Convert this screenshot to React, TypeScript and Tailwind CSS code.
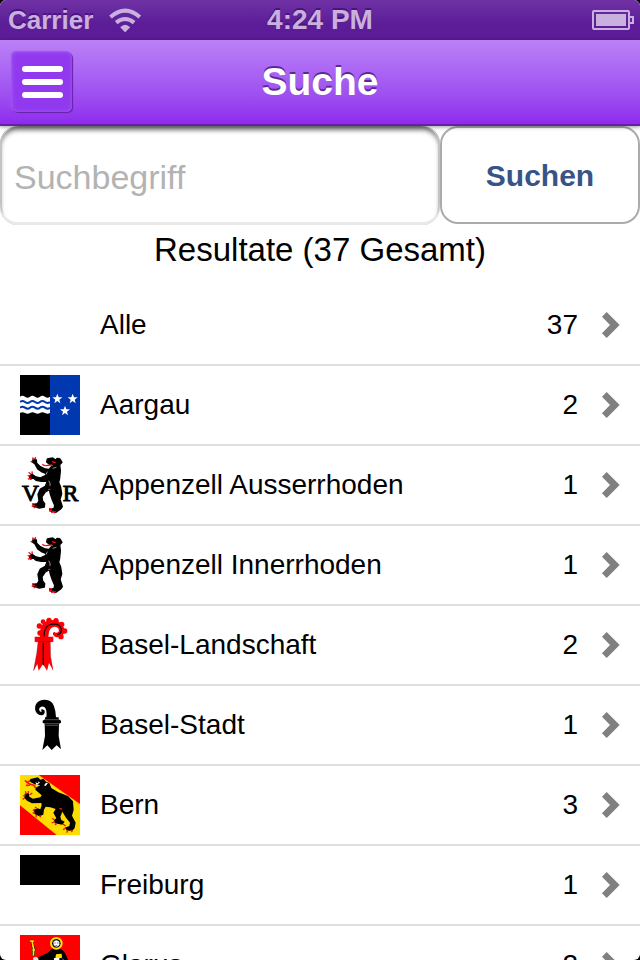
import React from 'react';

const FLAG_BOX = '30 15 180 180';

function Flag({ children }: { children?: React.ReactNode }) {
  return (
    <svg viewBox={FLAG_BOX} className="size-[60px] shrink-0" aria-hidden="true">
      {children}
    </svg>
  );
}

function Aargau() {
  const wave = 'q7 -6 15 0 t15 0 t15 0 t15 0 t15 0 t15 0';
  const star = 'M0 -15 L4 -4 L15 -4 L6 3 L9 14 L0 7 L-9 14 L-6 3 L-15 -4 L-4 -4 Z';
  return (
    <Flag>
      <rect x="30" y="15" width="90" height="180" fill="#000" />
      <rect x="120" y="15" width="90" height="180" fill="#0038b0" />
      <path d={`M30 80 ${wave} V129 q-7 5 -15 0 t-15 0 t-15 0 t-15 0 t-15 0 t-15 0 Z`} fill="#fff" />
      <path d={`M30 96 ${wave} M30 113 ${wave}`} fill="none" stroke="#0038b0" strokeWidth="6" />
      <g fill="#fff">
        <path d={star} transform="translate(142 86)" />
        <path d={star} transform="translate(188 86)" />
        <path d={star} transform="translate(165 122)" />
      </g>
    </Flag>
  );
}

function StandingBear() {
  return (
    <g>
      <path
        d="M112 27 L128 24 L137 30 L142 25 L150 27 L156 37 L149 44 L151 62 L149 84 L146 97 L152 112 L155 132 L150 148 L157 170 L152 177 L137 187 L123 184 L119 179 L132 175 L134 166 L127 150 L121 132 L118 119 L106 126 L96 141 L98 153 L104 161 L103 171 L88 174 L70 169 L69 163 L82 161 L87 153 L84 133 L91 117 L106 109 L112 94 L94 94 L78 91 L70 84 L61 87 L58 78 L66 73 L76 80 L90 84 L106 77 L109 71 L96 66 L83 57 L75 42 L67 36 L70 27 L79 30 L80 40 L91 50 L106 57 L118 58 L123 51 L136 45 L118 43 L110 36 Z"
        fill="#000"
        stroke="#000"
        strokeWidth="4"
        strokeLinejoin="round"
      />
      <g fill="none" stroke="#ff0f18" strokeWidth="4">
        <path d="M97 43 Q104 49 112 46 L126 45 M126 35 L137 38" />
        <path d="M67 37 L62 33 M70 30 L68 22 M75 29 L77 21" />
        <path d="M63 73 L56 67 M67 72 L66 64 M61 78 L53 77 M63 85 L54 87" />
        <path d="M73 161 L66 162 M75 166 L65 169 M80 170 L71 174" />
        <path d="M124 177 L117 175 M126 181 L117 183 M131 183 L124 189 M136 183 L133 190 M114 119 L121 118" />
      </g>
      <path d="M108 74 L112 65 M116 92 Q122 98 120 108 M128 55 L139 52" stroke="#ddd" strokeWidth="2" fill="none" />
    </g>
  );
}

function Ausserrhoden() {
  return (
    <Flag>
      <g fontFamily="'Liberation Serif', serif" fontSize="70" fill="#000" stroke="#000" strokeWidth="3">
        <text x="36" y="152">V</text>
        <text x="158" y="152">R</text>
      </g>
      <StandingBear />
    </Flag>
  );
}

function Innerrhoden() {
  return (
    <Flag>
      <StandingBear />
    </Flag>
  );
}

function BaselLandschaft() {
  return (
    <Flag>
      <g fill="#fb0007">
        <circle cx="90" cy="69" r="8" />
        <circle cx="88" cy="48" r="8" />
        <circle cx="99" cy="35" r="7" />
        <circle cx="117" cy="31" r="8" />
        <circle cx="138" cy="32" r="8" />
        <circle cx="155" cy="43" r="8" />
        <circle cx="164" cy="63" r="8" />
        <circle cx="153" cy="80" r="8" />
      </g>
      <path
        d="M90 80 Q88 48 104 36 Q124 25 147 35 Q168 50 162 70 Q153 86 135 80 Q124 73 132 65 Q139 71 146 65 Q149 52 134 50 Q116 50 115 80 L130 80 V95 H121 L122 140 L130 182 L117 159 L111 182 L99 162 L86 182 L82 162 L70 184 L80 130 L84 95 H74 V80 Z"
        fill="#fb0007"
      />
      <path
        d="M102 79 Q102 46 124 43 Q149 39 154 57 Q155 72 141 74 M100 98 V166"
        fill="none"
        stroke="#111"
        strokeWidth="4"
      />
      <path d="M84 98 L80 132 L71 182 M121 98 L122 140 L128 180" fill="none" stroke="#733" strokeWidth="1" />
      <path d="M76 95 H128" stroke="#a00" strokeWidth="2" />
    </Flag>
  );
}

function BaselStadt() {
  return (
    <Flag>
      <path
        d="M109 82 Q112 61 104 52 Q94 46 88 55 Q86 65 94 66 Q97 62 92 60 Q98 54 104 62 Q106 72 96 76 Q83 77 77 64 Q71 47 84 35 Q100 25 120 33 Q136 41 138 82 H146 V88 L153 92 V98 L147 101 L146 138 L153 178 L140 166 L125 180 L112 166 L97 180 L105 138 L104 101 L98 98 V92 L105 88 V82 Z"
        fill="#000"
      />
      <path d="M105 89 H147 M102 101 H150 M107 106 H145" stroke="#777" strokeWidth="2" />
    </Flag>
  );
}

function Bern() {
  return (
    <Flag>
      <rect x="30" y="15" width="180" height="180" fill="#ff0000" />
      <path d="M30 15 H86 L210 102 V195 H140 L30 106 Z" fill="#ffdc00" />
      <path
        d="M61 27 L84 22 L91 29 L101 26 L108 35 L118 39 L124 54 L145 67 L174 78 L189 94 L191 120 L186 137 L197 158 L194 174 L187 182 L171 182 L164 173 L178 168 L180 158 L168 143 L157 125 L151 140 L154 150 L164 155 L157 164 L134 160 L132 151 L139 145 L130 128 L137 117 L121 112 L107 110 L102 119 L100 134 L88 139 L73 132 L72 119 L83 115 L91 118 L95 106 L94 99 L66 100 L51 92 L43 83 L44 71 L56 69 L58 80 L69 86 L91 82 L95 76 L76 59 L77 53 L91 46 L74 43 L65 38 L59 34 Z"
        fill="#000"
      />
      <g fill="none" stroke="#f01818" strokeWidth="5">
        <path d="M60 32 L52 38 L61 43 L73 46 L76 54 M53 39 L45 31 M60 45 L48 46" />
        <path d="M47 75 L39 78 M49 73 L46 64 M55 71 L55 63 M58 75 L67 69 M44 84 L38 88" strokeWidth="4" />
        <path d="M74 117 L69 122 M80 115 L75 111 M74 126 L68 130 M79 134 L78 142 M89 136 L92 142" strokeWidth="4" />
        <path d="M134 150 L127 145 M134 155 L125 159 M141 160 L135 165 M148 116 L156 117" strokeWidth="4" />
        <path d="M167 168 L159 162 M168 174 L159 179 M174 180 L170 188 M182 180 L187 186" strokeWidth="4" />
      </g>
      <path d="M80 45 L76 37 L88 41 Z M102 46 L108 38 L114 39 L107 48 Z M83 34 L91 38 L86 40 Z" fill="#fff" />
    </Flag>
  );
}

function Freiburg() {
  return (
    <Flag>
      <rect x="30" y="15" width="180" height="90" fill="#000" />
      <rect x="30" y="105" width="180" height="90" fill="#fff" />
    </Flag>
  );
}

function Glarus() {
  return (
    <Flag>
      <rect x="30" y="15" width="180" height="180" fill="#ff0000" />
      <path d="M68 94 L84 82 L112 69 L125 58 Q139 50 154 58 Q170 68 177 102 L186 195 H95 L110 94 L90 92 Z" fill="#000" />
      <circle cx="139" cy="40" r="16" fill="#fff" stroke="#ffe400" strokeWidth="6" />
      <circle cx="139" cy="40" r="13" fill="#111" />
      <path d="M130 36 Q139 26 148 36 V45 Q140 56 131 45 Z" fill="#fff" />
      <path d="M133 39 H137 M141 39 H145 M136 47 H142" stroke="#222" strokeWidth="2" />
      <path d="M60 33 H72 M66 33 L71 58 L70 77 M66 60 H76" fill="none" stroke="#111" strokeWidth="8" />
      <path d="M60 33 H72 M66 33 L71 58 L70 77 M67 60 H75" fill="none" stroke="#ffe400" strokeWidth="5" />
      <path d="M69 83 L78 80 L85 85 L86 95 H70 Z" fill="#ddd" />
      <path d="M138 73 L155 71 L156 83 L146 85 H136 Z" fill="#ffe400" />
      <path d="M132 84 H148 V94 H132 Z" fill="#fff" />
      <path d="M155 85 L168 95" stroke="#999" strokeWidth="2" />
    </Flag>
  );
}

type Canton = { name: string; count: number; flag: React.ReactNode };

const cantons: Canton[] = [
  { name: 'Alle', count: 37, flag: <Flag /> },
  { name: 'Aargau', count: 2, flag: <Aargau /> },
  { name: 'Appenzell Ausserrhoden', count: 1, flag: <Ausserrhoden /> },
  { name: 'Appenzell Innerrhoden', count: 1, flag: <Innerrhoden /> },
  { name: 'Basel-Landschaft', count: 2, flag: <BaselLandschaft /> },
  { name: 'Basel-Stadt', count: 1, flag: <BaselStadt /> },
  { name: 'Bern', count: 3, flag: <Bern /> },
  { name: 'Freiburg', count: 1, flag: <Freiburg /> },
  { name: 'Glarus', count: 2, flag: <Glarus /> },
];

function StatusBar() {
  return (
    <div className="grid h-10 shrink-0 grid-cols-3 items-center bg-linear-to-b from-[#6f31a4] via-[#5c1d98] via-60% to-[#5c1b97] px-2 font-bold text-[#c9b0df] [text-shadow:0_-2px_0_#49157a]">
      <div className="flex items-center gap-4">
        <span className="text-[26px] leading-10">Carrier</span>
        <svg viewBox="330 22 98 72" className="h-6 w-[33px]" aria-hidden="true">
          <path d="M334 49 Q378 11 422 49" fill="none" stroke="#c9b0df" strokeWidth="12" />
          <path d="M351 66 Q378 44 405 66" fill="none" stroke="#c9b0df" strokeWidth="12" />
          <path d="M363 80 Q378 65 393 80 L378 95 Z" fill="#c9b0df" />
        </svg>
      </div>
      <span className="text-center text-[28px] leading-10">4:24 PM</span>
      <svg viewBox="0 0 42 20" className="mr-[-2px] h-5 w-[42px] justify-self-end" aria-hidden="true">
        <rect x="1" y="1" width="36" height="18" rx="1" fill="none" stroke="#c9b0df" strokeWidth="2" />
        <rect x="4" y="4" width="30" height="12" fill="#c9b0df" />
        <path d="M38 7 H41 V13 H38" fill="none" stroke="#c9b0df" strokeWidth="2" />
      </svg>
    </div>
  );
}

function NavBar() {
  return (
    <header className="relative z-10 grid h-[86px] shrink-0 grid-cols-[1fr_auto_1fr] items-center border-b-2 border-[#681fa8] bg-linear-to-b from-[#bc80f6] to-[#8f2aed] px-3 shadow-[0_1px_4px_rgba(0,0,0,0.4)]">
      <button
        type="button"
        aria-label="Menü"
        className="flex size-[60px] flex-col items-center justify-center gap-[7px] rounded-[5px] bg-[#9039ee] shadow-[inset_0_0_4px_#a45cf2,1px_1px_1px_#6522a8,-1px_-1px_1px_#9b5add]"
      >
        <span className="h-[6px] w-[41px] rounded-full bg-white" />
        <span className="h-[6px] w-[41px] rounded-full bg-white" />
        <span className="h-[6px] w-[41px] rounded-full bg-white" />
      </button>
      <h1 className="text-[39px] leading-[48px] font-bold text-white [text-shadow:0_-2px_0_#5b2a91]">Suche</h1>
    </header>
  );
}

function SearchForm() {
  return (
    <form className="flex shrink-0 items-start" onSubmit={(e) => e.preventDefault()}>
      <input
        type="search"
        aria-label="Suchbegriff"
        placeholder="Suchbegriff"
        className="h-[99px] min-w-0 flex-1 appearance-none rounded-[18px] bg-white px-[14px] pt-1 text-[34px] text-black shadow-[inset_0_-3px_0_#e9e9e9,inset_2px_0_0_#c4c4c4,inset_-2px_0_0_#c4c4c4,inset_0_4px_5px_#777] outline-none placeholder:text-[#b3b3b3]"
      />
      <button
        type="submit"
        className="h-[98px] w-[200px] rounded-[18px] border-2 border-[#ababab] bg-white text-[30px] font-bold text-[#385487]"
      >
        Suchen
      </button>
    </form>
  );
}

function CantonRow({ name, count, flag }: Canton) {
  return (
    <li className="border-b-2 border-[#dedede]">
      <a href="#" className="flex h-[78px] items-center px-5 text-[28px] text-black">
        {flag}
        <span className="ml-5 flex-1">{name}</span>
        <span>{count}</span>
        <svg viewBox="185 65 54 78" className="ml-6 h-[26px] w-[18px]" aria-hidden="true">
          <path d="M199 65 L238 104 L199 143 L185 129 L209 104 L185 79 Z" fill="#808080" />
        </svg>
      </a>
    </li>
  );
}

export default function App() {
  return (
    <div className="h-screen bg-black">
      <main className="flex h-full flex-col overflow-hidden rounded-[6px] bg-white font-['Liberation_Sans',Arial,sans-serif]">
        <StatusBar />
        <NavBar />
        <SearchForm />
        <h2 className="shrink-0 pt-px pb-3 text-center text-[33px] leading-[48px] text-black">Resultate (37 Gesamt)</h2>
        <ul className="shrink-0">
          {cantons.map((canton) => (
            <CantonRow key={canton.name} {...canton} />
          ))}
        </ul>
      </main>
    </div>
  );
}
